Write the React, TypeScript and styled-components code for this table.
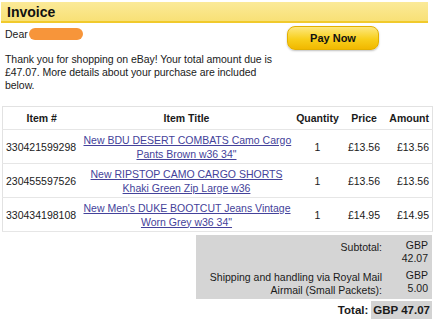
import styled, { createGlobalStyle } from "styled-components";

const GlobalStyle = createGlobalStyle`
  body {
    margin: 0;
    background: #fff;
    font-family: "Liberation Sans", Arial, sans-serif;
    color: #1a1a1a;
  }
`;

type Item = { id: string; title: [string, string]; qty: number; price: string };

const items: Item[] = [
  { id: "330421599298", title: ["New BDU DESERT COMBATS Camo Cargo", "Pants Brown w36 34\""], qty: 1, price: "£13.56" },
  { id: "230455597526", title: ["New RIPSTOP CAMO CARGO SHORTS", "Khaki Green Zip Large w36"], qty: 1, price: "£13.56" },
  { id: "330434198108", title: ["New Men's DUKE BOOTCUT Jeans Vintage", "Worn Grey w36 34\""], qty: 1, price: "£14.95" },
];

export default function App() {
  return (
    <Page>
      <GlobalStyle />
      <Banner>Invoice</Banner>
      <Intro>
        <div>
          <Dear>
            Dear <NameBlur />
          </Dear>
          <Message>
            Thank you for shopping on eBay! Your total amount due is £47.07. More details about your purchase are
            included below.
          </Message>
        </div>
        <PayButton>Pay Now</PayButton>
      </Intro>

      <ItemTable>
        <colgroup>
          <col style={{ width: 78 }} />
          <col style={{ width: 212 }} />
          <col style={{ width: 50 }} />
          <col style={{ width: 43 }} />
          <col style={{ width: 47 }} />
        </colgroup>
        <thead>
          <tr>
            <Th>Item #</Th>
            <Th>Item Title</Th>
            <Th>Quantity</Th>
            <Th>Price</Th>
            <Th $align="right">Amount</Th>
          </tr>
        </thead>
        <tbody>
          {items.map((it) => (
            <tr key={it.id}>
              <Td $align="left">{it.id}</Td>
              <Td>
                <ItemLink href="#">
                  {it.title[0]}
                  <br />
                  {it.title[1]}
                </ItemLink>
              </Td>
              <Td>{it.qty}</Td>
              <Td>{it.price}</Td>
              <Td $align="right">{it.price}</Td>
            </tr>
          ))}
        </tbody>
      </ItemTable>

      <Summary>
        <SumLabel>Subtotal:</SumLabel>
        <SumValue>
          GBP
          <br />
          42.07
        </SumValue>
        <SumLabel>
          Shipping and handling via Royal Mail
          <br />
          Airmail (Small Packets):
        </SumLabel>
        <SumValue>
          GBP
          <br />
          5.00
        </SumValue>
      </Summary>
      <TotalRow>
        <span>Total:</span>
        <TotalValue>GBP 47.07</TotalValue>
      </TotalRow>
    </Page>
  );
}

const Page = styled.div`
  width: 434px;
  padding-top: 2px;
  font-size: 10.5px;
`;

const Banner = styled.div`
  margin: 0 6px 0 1px;
  height: 19px;
  padding-left: 6px;
  background: linear-gradient(#fbea98, #f8e076);
  border-bottom: 2px solid #f1ca2c;
  font-size: 14px;
  font-weight: bold;
  line-height: 20px;
  color: #111;
`;

const Intro = styled.div`
  display: flex;
  justify-content: space-between;
  align-items: flex-start;
  padding: 4px 55px 0 5px;
  height: 79px;
`;

const Dear = styled.div`
  display: flex;
  align-items: center;
  gap: 1px;
  height: 14px;
`;

const NameBlur = styled.span`
  display: inline-block;
  width: 54px;
  height: 12px;
  border-radius: 6px;
  background: #f7953a;
  filter: blur(0.6px);
`;

const Message = styled.p`
  margin: 12px 0 0;
  width: 272px;
  line-height: 13px;
  letter-spacing: -0.05px;
`;

const PayButton = styled.button`
  margin-top: -1px;
  width: 92px;
  height: 24px;
  border: 1px solid #e3b000;
  border-radius: 8px;
  background: linear-gradient(#fde880, #f8cf1c 55%, #f1b800);
  box-shadow: 0 1px 2px rgba(0, 0, 0, 0.25);
  font-family: "Liberation Sans", Arial, sans-serif;
  font-size: 11px;
  font-weight: bold;
  color: #111;
`;

const ItemTable = styled.table`
  margin: 0 2px;
  width: 430px;
  border-collapse: collapse;
  table-layout: fixed;
  border: 1px solid #e2e2e2;
  font-size: 10.5px;
`;

const Th = styled.th<{ $align?: string }>`
  height: 22px;
  padding: 0 3px;
  text-align: ${(p) => p.$align ?? "center"};
  font-weight: bold;
  border-bottom: 1px solid #e6e6e6;
`;

const Td = styled.td<{ $align?: string }>`
  height: 33px;
  padding: 0 3px;
  text-align: ${(p) => p.$align ?? "center"};
  line-height: 14px;
  border-bottom: 1px solid #e6e6e6;
  white-space: nowrap;
`;

const ItemLink = styled.a`
  color: #44429a;
  text-decoration: underline;
`;

const Summary = styled.div`
  margin: 3px 2px 0 196px;
  padding: 4px 4px 2px 0;
  background: #d5d5d5;
  display: grid;
  grid-template-columns: 1fr 36px;
  column-gap: 10px;
  row-gap: 4px;
  line-height: 13px;
  text-align: right;
`;

const SumLabel = styled.div`
  align-self: start;
  padding-top: 2px;
`;

const SumValue = styled.div``;

const TotalRow = styled.div`
  display: flex;
  justify-content: flex-end;
  align-items: center;
  gap: 3px;
  margin: 2px 2px 0;
  font-size: 11.5px;
  font-weight: bold;
`;

const TotalValue = styled.span`
  background: #d3d3d3;
  padding: 1px 2px;
  line-height: 16px;
`;
